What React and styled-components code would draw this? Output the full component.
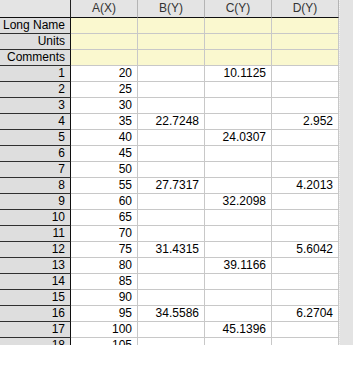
import { Fragment } from 'react';
import styled, { createGlobalStyle } from 'styled-components';

const Global = createGlobalStyle`
  body {
    margin: 0;
    background: #ffffff;
    font-family: "Liberation Sans", Arial, sans-serif;
  }
`;

const Window = styled.div`
  display: flex;
  height: 345px;
  overflow: hidden;
`;

const Sheet = styled.div`
  display: grid;
  grid-template-columns: 71px repeat(4, 67px);
  grid-auto-rows: 16px;
  grid-template-rows: 18px;
  align-content: start;
`;

const Cell = styled.div`
  box-sizing: border-box;
  border-right: 1px solid #c8c8c8;
  border-bottom: 1px solid #c8c8c8;
  background: ${(p) => (p.$label ? '#faf8cf' : '#ffffff')};
  font-size: 12px;
  line-height: 15px;
  color: #000;
  text-align: right;
  padding-right: 5px;
  white-space: nowrap;
  overflow: hidden;
`;

const ColHead = styled.div`
  box-sizing: border-box;
  background: #e4e4e4;
  border-right: 1px solid ${(p) => (p.$corner ? '#202020' : '#b4b4b4')};
  border-bottom: 1px solid #101010;
  font-size: 12px;
  line-height: 17px;
  color: #333;
  text-align: center;
`;

const RowHead = styled.div`
  box-sizing: border-box;
  background: #dedede;
  border-right: 1px solid #101010;
  border-bottom: 1px solid #303030;
  font-size: 12px;
  line-height: 15px;
  color: #000;
  text-align: right;
  padding-right: 5px;
  white-space: nowrap;
`;

const Strip = styled.div`
  width: 14px;
  background: #e3e3e3;
  border-left: 1px dotted #f2f2f2;
  box-sizing: border-box;
`;

const labels = ['Long Name', 'Units', 'Comments'];

const rows = [
  ['20', '', '10.1125', ''],
  ['25', '', '', ''],
  ['30', '', '', ''],
  ['35', '22.7248', '', '2.952'],
  ['40', '', '24.0307', ''],
  ['45', '', '', ''],
  ['50', '', '', ''],
  ['55', '27.7317', '', '4.2013'],
  ['60', '', '32.2098', ''],
  ['65', '', '', ''],
  ['70', '', '', ''],
  ['75', '31.4315', '', '5.6042'],
  ['80', '', '39.1166', ''],
  ['85', '', '', ''],
  ['90', '', '', ''],
  ['95', '34.5586', '', '6.2704'],
  ['100', '', '45.1396', ''],
  ['105', '', '', ''],
];

const App = () => (
  <>
    <Global />
    <Window>
      <Sheet>
        <ColHead $corner />
        {['A(X)', 'B(Y)', 'C(Y)', 'D(Y)'].map((h) => (
          <ColHead key={h}>{h}</ColHead>
        ))}
        {labels.map((l) => (
          <Fragment key={l}>
            <RowHead>{l}</RowHead>
            {[0, 1, 2, 3].map((i) => <Cell key={i} $label />)}
          </Fragment>
        ))}
        {rows.map((r, n) => (
          <Fragment key={n}>
            <RowHead>{n + 1}</RowHead>
            {r.map((v, i) => <Cell key={i}>{v}</Cell>)}
          </Fragment>
        ))}
      </Sheet>
      <Strip />
    </Window>
  </>
);

export default App;
